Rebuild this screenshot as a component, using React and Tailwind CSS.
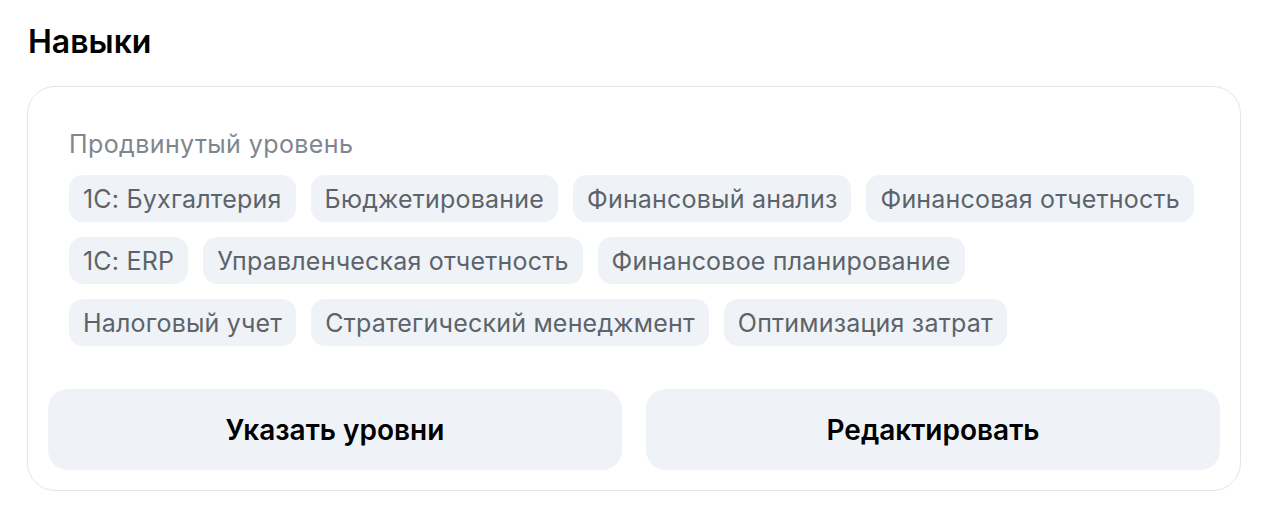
const rows = [
  ['1С: Бухгалтерия', 'Бюджетирование', 'Финансовый анализ', 'Финансовая отчетность'],
  ['1С: ERP', 'Управленческая отчетность', 'Финансовое планирование'],
  ['Налоговый учет', 'Стратегический менеджмент', 'Оптимизация затрат'],
];

const Chip = ({ children }) => (
  <span className="flex h-[47px] shrink-0 items-center whitespace-nowrap rounded-[14px] bg-[#eff3f7] px-[14px] text-[25px] leading-[32px] tracking-[0.2px] text-[#5c636b]">
    {children}
  </span>
);

export default function App() {
  return (
    <div className="min-h-screen bg-white pl-[27px] pr-[33px] pt-[20px] font-['Inter',sans-serif]">
      <h2 className="pl-px text-[32px] font-semibold leading-[44px] text-black">Навыки</h2>

      <div className="mt-[22px] rounded-[28px] border border-[#e3e5e8] p-5">
        <div className="px-[21px] pt-[21px] pb-[43px]">
          <div className="text-[25px] leading-[32px] tracking-[0.4px] text-[#80868e]">Продвинутый уровень</div>
          <div className="mt-[15px] flex flex-col gap-[15px]">
            {rows.map((row, i) => (
              <div key={i} className="flex gap-[15px]">
                {row.map((skill) => (
                  <Chip key={skill}>{skill}</Chip>
                ))}
              </div>
            ))}
          </div>
        </div>

        <div className="grid grid-cols-2 gap-6">
          <button className="h-[81px] rounded-[20px] bg-[#eff3f7] text-[28px] font-semibold text-black">
            Указать уровни
          </button>
          <button className="h-[81px] rounded-[20px] bg-[#eff3f7] text-[28px] font-semibold text-black">
            Редактировать
          </button>
        </div>
      </div>
    </div>
  );
}
